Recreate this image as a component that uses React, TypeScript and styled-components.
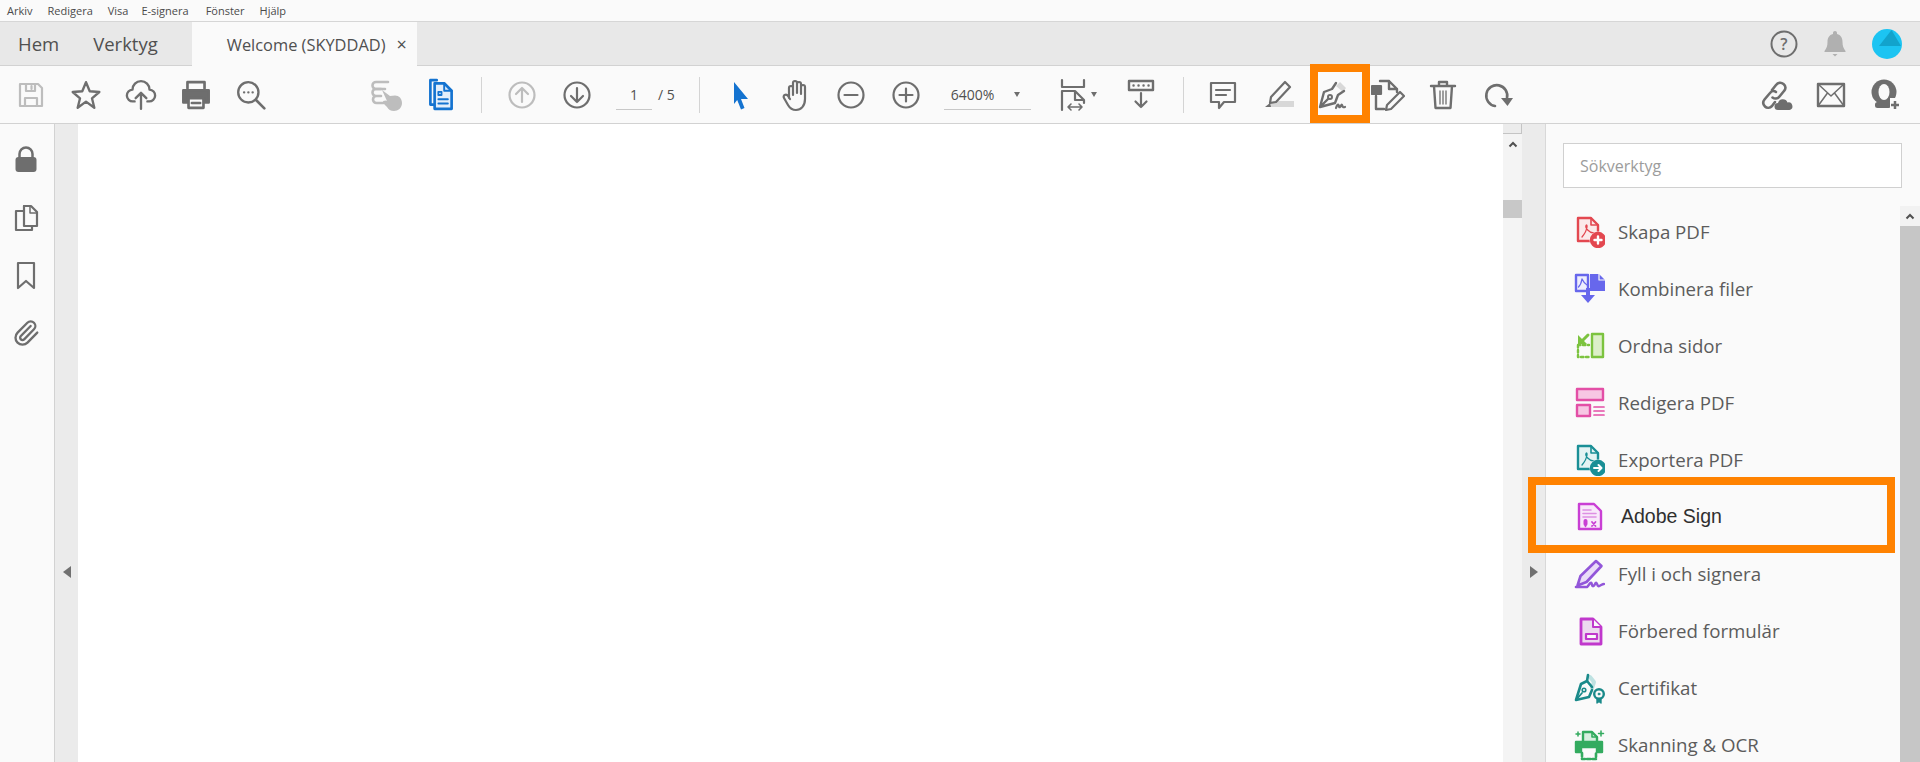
import React from "react";
import styled, { createGlobalStyle } from "styled-components";
import { Paperclip } from "lucide-react";

const GlobalStyle = createGlobalStyle`
  html, body {
    margin: 0;
    height: 100%;
    overflow: hidden;
    background: #fafafa;
    font-family: "Open Sans", "Noto Sans", sans-serif;
  }
  #root {
    height: 100%;
  }
`;

const ORANGE = "#ff8200";
const GREY = "#6e6e6e";

const Page = styled.div`
  height: 762px;
  width: 1920px;
  display: flex;
  flex-direction: column;
  overflow: hidden;
`;

const MenuBar = styled.div`
  height: 21px;
  flex: none;
  display: flex;
  align-items: center;
  background: #fafafa;
  border-bottom: 1px solid #d6d6d6;
`;

const MenuItem = styled.span<{ $left: number }>`
  margin-left: ${(p) => p.$left}px;
  font-size: 11px;
  color: #4b4b4b;
`;

const TabBar = styled.div`
  height: 43px;
  flex: none;
  display: flex;
  align-items: stretch;
  background: #e8e8e8;
  border-bottom: 1px solid #d2d2d2;
`;

const NavTab = styled.div<{ $left: number }>`
  margin-left: ${(p) => p.$left}px;
  display: flex;
  align-items: center;
  font-size: 18.5px;
  color: #505050;
`;

const ActiveTab = styled.div`
  margin-left: 34px;
  margin-bottom: -1px;
  width: 225px;
  display: flex;
  align-items: center;
  padding-left: 35px;
  box-sizing: border-box;
  background: #fafafa;
  font-size: 16.4px;
  color: #505050;
`;

const TabClose = styled.span`
  margin-left: 11px;
  font-size: 18px;
  line-height: 18px;
  color: #505050;
`;

const TabActions = styled.div`
  margin-left: auto;
  display: flex;
  align-items: center;
  gap: 25px;
  padding-right: 18px;
`;

const Toolbar = styled.div`
  height: 57px;
  flex: none;
  display: flex;
  align-items: center;
  background: #fafafa;
  border-bottom: 1px solid #d2d2d2;
`;

const ToolGroup = styled.div<{ $left?: number }>`
  display: flex;
  align-items: center;
  margin-left: ${(p) => p.$left ?? 0}px;
`;

const Tool = styled.div<{ $width?: number }>`
  position: relative;
  width: ${(p) => p.$width ?? 55}px;
  height: 40px;
  display: flex;
  align-items: center;
  justify-content: center;
`;

const ToolHighlight = styled.div`
  position: absolute;
  left: 4px;
  right: -9px;
  top: -11px;
  bottom: -8px;
  border: 8px solid ${ORANGE};
`;

const Separator = styled.div<{ $left: number }>`
  width: 1px;
  height: 36px;
  margin-left: ${(p) => p.$left}px;
  background: #d4d4d4;
`;

const PageBox = styled.div`
  margin-left: 12px;
  display: flex;
  align-items: center;
  font-size: 14px;
  color: #505050;
`;

const PageInput = styled.div`
  width: 36px;
  height: 30px;
  line-height: 29px;
  box-sizing: border-box;
  text-align: center;
  border-bottom: 1px solid #c8c8c8;
`;

const PageTotal = styled.span`
  margin-left: 6px;
`;

const ZoomBox = styled.div`
  margin-left: 10px;
  width: 87px;
  height: 30px;
  box-sizing: border-box;
  padding-left: 7px;
  display: flex;
  align-items: center;
  justify-content: space-between;
  padding-right: 11px;
  border-bottom: 1px solid #c8c8c8;
  font-size: 14px;
  color: #505050;
`;

const Caret = styled.span`
  display: inline-block;
  width: 0;
  height: 0;
  border-left: 3.5px solid transparent;
  border-right: 3.5px solid transparent;
  border-top: 5px solid ${GREY};
`;

const Workspace = styled.div`
  flex: 1;
  min-height: 0;
  display: flex;
`;

const LeftRail = styled.div`
  width: 55px;
  flex: none;
  display: flex;
  flex-direction: column;
  align-items: center;
  gap: 28px;
  padding: 21px 2px 0 0;
  box-sizing: border-box;
  background: #fafafa;
  border-right: 1px solid #d2d2d2;
  color: ${GREY};
`;

const Gutter = styled.div`
  width: 23px;
  flex: none;
  display: flex;
  align-items: center;
  justify-content: center;
  padding-top: 258px;
  box-sizing: border-box;
  background: #ebebeb;
`;

const GutterArrow = styled.span<{ $dir: "left" | "right" }>`
  width: 0;
  height: 0;
  border-top: 6px solid transparent;
  border-bottom: 6px solid transparent;
  border-${(p) => (p.$dir === "left" ? "right" : "left")}: 8px solid #707070;
`;

const Document = styled.div`
  flex: 1;
  background: #ffffff;
`;

const DocScroll = styled.div`
  width: 19px;
  flex: none;
  display: flex;
  flex-direction: column;
  background: #f4f4f4;
`;

const ScrollCap = styled.div`
  height: 9px;
  background: #ececec;
  border-bottom: 1px solid #c4c4c4;
  border-right: 1px solid #c4c4c4;
`;

const ScrollUp = styled.div`
  height: 20px;
  display: flex;
  align-items: center;
  justify-content: center;
`;

const DocThumb = styled.div`
  margin-top: 46px;
  height: 18px;
  background: #c8c8c8;
`;

const ToolsPanel = styled.div`
  width: 375px;
  flex: none;
  display: flex;
  flex-direction: column;
  background: #fafafa;
  border-left: 1px solid #d8d8d8;
  box-sizing: border-box;
`;

const SearchBox = styled.div`
  flex: none;
  margin: 19px 0 0 17px;
  width: 339px;
  height: 45px;
  box-sizing: border-box;
  display: flex;
  align-items: center;
  padding-left: 16px;
  background: #fff;
  border: 1px solid #d0d0d0;
  font-size: 16px;
  color: #9c9c9c;
`;

const ListArea = styled.div`
  flex: 1;
  min-height: 0;
  margin-top: 15px;
  display: flex;
`;

const ToolList = styled.div`
  flex: 1;
  display: flex;
  flex-direction: column;
`;

const ToolRow = styled.div`
  position: relative;
  flex: none;
  height: 57px;
  display: flex;
  align-items: center;
  padding-left: 27px;
`;

const RowIcon = styled.div`
  width: 32px;
  height: 32px;
  flex: none;
`;

const RowLabel = styled.span<{ $strong?: boolean }>`
  margin-left: ${(p) => (p.$strong ? 16 : 13)}px;
  font-family: ${(p) => (p.$strong ? '"Liberation Sans", Arial, sans-serif' : '"Open Sans", "Noto Sans", sans-serif')};
  font-size: ${(p) => (p.$strong ? 19.5 : 18.7)}px;
  color: ${(p) => (p.$strong ? "#2f2f2f" : "#5c5c5c")};
`;

const RowHighlight = styled.div`
  position: absolute;
  left: -18px;
  right: 5px;
  top: -11px;
  bottom: -8px;
  border: 8px solid ${ORANGE};
`;

const ListScroll = styled.div`
  width: 20px;
  flex: none;
  margin-top: 3px;
  display: flex;
  flex-direction: column;
  background: #f2f2f2;
`;

const ListThumb = styled.div`
  flex: 1;
  background: #c6c6c6;
`;

const Svg = styled.svg<{ $size?: number; $tone?: string }>`
  width: ${(p) => p.$size ?? 30}px;
  height: ${(p) => p.$size ?? 30}px;
  display: block;
  fill: none;
  stroke: ${(p) => p.$tone ?? GREY};
  stroke-width: 2.2;
  stroke-linecap: round;
  stroke-linejoin: round;
`;

const ColorSvg = styled.svg<{ $color: string }>`
  width: 32px;
  height: 32px;
  display: block;
  fill: none;
  stroke: ${(p) => p.$color};
  stroke-width: 2.4;
  stroke-linejoin: round;
  stroke-linecap: round;
`;

const UpChevron = () => (
  <svg width="10" height="7" viewBox="0 0 10 7" fill="none" stroke="#505050" strokeWidth="2">
    <path d="M1.5 5.5 5 2l3.5 3.5" />
  </svg>
);

// ---- toolbar drawings ----

const SaveIcon = () => (
  <Svg viewBox="0 0 30 30" $tone="#bdbdbd">
    <path d="M4 4h18l4 4v18H4z" />
    <path d="M10 4v7h9V4M15.5 6v3M9 26v-8h12v8" />
  </Svg>
);
const StarIcon = () => (
  <Svg viewBox="0 0 30 30" $size={32}>
    <path d="M15 3l3.5 8.5 9 .7-6.9 5.900 2.2 8.900L15 21.200 7.200 27l2.200-8.900L2.500 12.200l9-.7z" />
  </Svg>
);
const UploadIcon = () => (
  <Svg viewBox="0 0 30 30" $size={32}>
    <path d="M9 21H7.5a5.5 5.5 0 0 1-.5-11 8 8 0 0 1 16 0 5.5 5.5 0 0 1-.5 11H21" />
    <path d="M15 28V13M10 18l5-5 5 5" />
  </Svg>
);
const PrintIcon = () => (
  <Svg viewBox="0 0 30 30" $size={32}>
    <path d="M7 9V3h16v6" strokeWidth="2.5" />
    <path d="M3 10.5h24V22h-4v-5H7v5H3z" fill={GREY} />
    <path d="M8 18h14v9H8z" strokeWidth="2.5" />
    <path d="M11 22.5h8" />
  </Svg>
);
const SearchMoreIcon = () => (
  <Svg viewBox="0 0 30 30" $size={32}>
    <circle cx="12.5" cy="12.5" r="9.5" />
    <path d="M19.5 19.5 27.5 27.5" strokeWidth="2.5" />
    <path d="M8.5 12.5h.1M12.5 12.5h.1M16.5 12.5h.1" />
  </Svg>
);
const TouchIcon = () => (
  <Svg viewBox="0 0 34 34" $size={34} $tone="#bdbdbd">
    <path d="M19 4H7a3.5 3.5 0 0 0 0 7h9" strokeWidth="2.6" />
    <path d="M12 11H7a3.5 3.5 0 0 0 0 7h5M12 18H7.5a3.5 3.5 0 0 0 0 7h7" strokeWidth="2.6" />
    <path d="M13 12l8 6 5-.5c4 0 7 3 7 7.5 0 5-4 8-8 8-3.5 0-5.5-1.500-7-4l-3-3-1-3 3-.5 1 .5z" fill="#bdbdbd" stroke="none" />
  </Svg>
);
const DocBlueIcon = () => (
  <Svg viewBox="0 0 30 32" $size={34} $tone="#1473d0">
    <path d="M11 2H5v23h3" strokeWidth="2.5" />
    <path d="M9 5h9l7 7v17H9z" fill="#e3eefa" strokeWidth="2.5" />
    <path d="M18 5v7h7" strokeWidth="1.8" />
    <path d="M12.5 13h3v3h-3zM12.5 20h9M12.5 24h9" strokeWidth="1.7" />
  </Svg>
);
const CircleArrow = ({ up, dim }: { up?: boolean; dim?: boolean }) => (
  <Svg viewBox="0 0 30 30" $tone={dim ? "#bdbdbd" : GREY}>
    <circle cx="15" cy="15" r="12.5" />
    <path d={up ? "M15 22V8M9 14l6-6 6 6" : "M15 8v14M9 16l6 6 6-6"} />
  </Svg>
);
const PointerIcon = () => (
  <svg width="30" height="32" viewBox="0 0 30 32">
    <path d="M8 3l14 17h-7l3.5 9-3.5 1.5-3.8-9.5L8 25z" fill="#1473d0" />
  </svg>
);
const HandIcon = () => (
  <Svg viewBox="0 0 32 34" $size={34}>
    <path d="M9 20V10a2 2 0 0 1 4 0v7M13 15V5a2 2 0 0 1 4 0v10M17 15V6a2 2 0 0 1 4 0v9M21 16V9a2 2 0 0 1 4 0v12c0 7-4 11-9 11-4 0-6-1.500-8-5l-4-7c-1.500-2.500 2-5 4-2l2 3" />
  </Svg>
);
const CircleSign = ({ plus }: { plus?: boolean }) => (
  <Svg viewBox="0 0 30 30">
    <circle cx="15" cy="15" r="12.5" />
    <path d={plus ? "M8.5 15h13M15 8.5v13" : "M8.5 15h13"} />
  </Svg>
);
const FitSvg = styled(Svg)`
  width: 26px;
  height: 34px;
`;
const FitIcon = () => (
  <FitSvg viewBox="0 0 26 34">
    <path d="M2 2v7h22V2" />
    <path d="M2 32V13h13l9 9v3M15 13v9h9" />
    <path d="M8 29h14M11 26l-3 3 3 3M19 26l3 3-3 3" strokeWidth="1.6" />
  </FitSvg>
);
const ScrollModeSvg = styled(Svg)`
  width: 30px;
  height: 34px;
`;
const ScrollModeIcon = () => (
  <ScrollModeSvg viewBox="0 0 30 34">
    <path d="M3 3h24v9H3z" strokeWidth="2.4" />
    <path d="M7.5 7.5h.1M12.5 7.5h.1M17.500 7.5h.1M22.5 7.5h.1" strokeWidth="2.4" />
    <path d="M15 15v14M9.500 23.500 15 29l5.500-5.500" />
  </ScrollModeSvg>
);
const CommentIcon = () => (
  <Svg viewBox="0 0 30 30">
    <path d="M3 3h24v19H16l-5 6v-6H3z" />
    <path d="M8 10h14M8 15h10" />
  </Svg>
);
const HighlightIcon = () => (
  <svg width="34" height="32" viewBox="0 0 34 32" fill="none">
    <path d="M6 28h27v-6H12z" fill="#d8d8d8" />
    <path d="M24 3l5 5-14 15-6 1 1-6z" stroke={GREY} strokeWidth="2.2" strokeLinejoin="round" />
    <path d="M9 24l-5 4h6z" fill={GREY} />
  </svg>
);
const PenSignIcon = () => (
  <svg width="34" height="34" viewBox="0 0 34 34" fill="none" stroke={GREY} strokeWidth="2.4" strokeLinecap="round" strokeLinejoin="round">
    <path d="M24 4l6 6-3 4-7-6z" fill="#d8d8d8" stroke="none" />
    <path d="M20 5l-4 6-8 3-4 15 15-4 3-8 6-4M4 29l8-8" />
    <circle cx="14" cy="19" r="2" strokeWidth="2" />
    <path d="M20 30c1-3 2-4 2.5-3s.5 3 1.500 2 1.500-3 2-2 .5 3 3 2" strokeWidth="2.2" />
  </svg>
);
const DocEditIcon = () => (
  <Svg viewBox="0 0 34 34" $size={34}>
    <path d="M9 3h9l8 8v3M18 3v8h8M5 18v13h8" strokeWidth="2.4" />
    <path d="M1 8h9v8H1z" fill={GREY} />
    <path d="M29 14l4 4-13 13-5 1 1-5z" />
  </Svg>
);
const TrashIcon = () => (
  <Svg viewBox="0 0 30 32" $size={32}>
    <path d="M3 7h24M11 7V3h8v4M6 7l1.500 22h15L24 7" strokeWidth="2.4" />
    <path d="M12 12v13M15 12v13M18 12v13" strokeWidth="1.3" />
  </Svg>
);
const RotateIcon = () => (
  <svg width="30" height="30" viewBox="0 0 30 30" fill="none">
    <path d="M12 26A10.5 10.5 0 1 1 24 18" stroke={GREY} strokeWidth="2.6" strokeLinecap="round" />
    <path d="M18 18h12l-5.5 8z" fill={GREY} />
  </svg>
);
const LinkCloudIcon = () => (
  <Svg viewBox="0 0 34 34" $size={34}>
    <path d="M13 12l4-5c2-2.5 5-3 7.500-1s2.500 5 .5 7l-4.500 5.500c-2 2.500-5 2.500-7 1" strokeWidth="2.6" />
    <path d="M17 14c-2-1.500-4.500-1-6 1l-5.500 6.500c-2 2.500-1.500 5 .5 7s5 1.500 7-.5l3-4" strokeWidth="2.6" />
    <path d="M19 32a3.5 3.5 0 0 1 0-7 5 5 0 0 1 9.5-.5 3.8 3.8 0 0 1 2 7.500z" fill={GREY} stroke="none" />
  </Svg>
);
const MailIcon = () => (
  <Svg viewBox="0 0 30 30">
    <path d="M2 4h26v22H2z" strokeWidth="2.4" />
    <path d="M2 4l13 12L28 4M2 26l9.5-13M28 26l-9.5-13" strokeWidth="1.5" />
  </Svg>
);
const UserPlusIcon = () => (
  <svg width="32" height="34" viewBox="0 0 32 34">
    <circle cx="14" cy="14" r="12.5" fill={GREY} />
    <ellipse cx="14" cy="14" rx="5.5" ry="8" fill="#fafafa" />
    <rect x="5" y="24" width="16" height="6" rx="2.5" fill={GREY} />
    <rect x="20" y="20" width="12" height="14" fill="#fafafa" />
    <path d="M25 23v8M21 27h8" stroke={GREY} strokeWidth="2.5" />
  </svg>
);
const HelpIcon = () => (
  <svg width="28" height="28" viewBox="0 0 28 28" fill="none">
    <circle cx="14" cy="14" r="12.5" stroke={GREY} strokeWidth="2" />
    <text x="14" y="19.5" textAnchor="middle" fontFamily="Open Sans, sans-serif" fontSize="16" fontWeight="600" fill={GREY}>?</text>
  </svg>
);
const BellIcon = () => (
  <svg width="24" height="30" viewBox="0 0 24 30">
    <path d="M12 2c1.200 0 2 .8 2 2v1c4 1 5.500 4 5.500 8 0 4 1 6 3 9v1H1.500v-1c2-3 3-5 3-9 0-4 1.500-7 5.500-8V4c0-1.200.8-2 2-2z" fill="#b0b0b0" />
    <path d="M9.5 25h5l-2.5 2.5z" fill="#b0b0b0" />
  </svg>
);
const AvatarIcon = () => (
  <svg width="30" height="30" viewBox="0 0 30 30">
    <circle cx="15" cy="15" r="15" fill="#1cc4f2" />
    <path d="M19.5 1 29 17H7z" fill="#12a3cc" />
  </svg>
);
const LockIcon = () => (
  <svg width="24" height="30" viewBox="0 0 24 30">
    <path d="M5.5 13V9a6.5 6.5 0 0 1 13 0v4" fill="none" stroke={GREY} strokeWidth="2.5" />
    <rect x="1.5" y="12" width="21" height="15" rx="3" fill={GREY} />
  </svg>
);
const RailSvg = styled(Svg)<{ $w: number }>`
  width: ${(p) => p.$w}px;
  height: 30px;
`;
const PagesIcon = () => (
  <RailSvg $w={26} viewBox="0 0 26 30">
    <path d="M11 3h7l6 6v14h-5" />
    <path d="M17 3v7h7" strokeWidth="1.5" />
    <path d="M11 3v5H3v19h16v-4" />
    <path d="M11 8v15h8" />
  </RailSvg>
);
const BookmarkIcon = () => (
  <RailSvg $w={24} viewBox="0 0 24 30">
    <path d="M4 2h16v25l-8-7-8 7z" />
  </RailSvg>
);

// ---- tool list drawings ----

const pdfMark = "M9 21c2.5-3 4.5-6 5-10 .3-2-.5-2.5-1-1.500-1 2.500 3 7 7.500 7.500";

const toolIcons: Record<string, React.ReactNode> = {
  create: (
    <ColorSvg $color="#e34850" viewBox="0 0 32 32">
      <path d="M5 2h13l7 7v16H5z" fill="#fbe9e9" />
      <path d="M18 2v7h7" strokeWidth="1.6" />
      <path d={pdfMark} strokeWidth="1.3" />
      <circle cx="25" cy="24" r="8.5" fill="#fafafa" stroke="none" />
      <circle cx="25" cy="24" r="7" fill="#e34850" />
      <path d="M25 20.5v7M21.5 24h7" stroke="#fff" strokeWidth="2.4" />
    </ColorSvg>
  ),
  combine: (
    <ColorSvg $color="#6767ec" viewBox="0 0 32 32">
      <path d="M3 2h12v16H3z" fill="#eeeefd" />
      <path d="M5.5 14c2-2 3-5 3.5-8 1.5 3 3 5 5 6" strokeWidth="1.3" />
      <path d="M17 1h9l6 6v11H17z" fill="#6767ec" stroke="none" />
      <path d="M26 1v6h6" stroke="#fafafa" strokeWidth="1.2" />
      <path d="M15 15v8" strokeWidth="4" strokeLinecap="butt" stroke="#6767ec" />
      <path d="M8 22h14l-7 8z" fill="#6767ec" stroke="none" />
    </ColorSvg>
  ),
  organize: (
    <ColorSvg $color="#7cc33f" viewBox="0 0 32 32">
      <path d="M19 4h11v23H19z" fill="#dcefc8" />
      <path d="M5 15h11M5 15v12h11" strokeDasharray="2.5 2.5" />
      <path d="M15 5 9 11" strokeWidth="3" />
      <path d="M5 5v9h9z" fill="#7cc33f" stroke="none" />
    </ColorSvg>
  ),
  edit: (
    <ColorSvg $color="#e34fa6" viewBox="0 0 32 32">
      <path d="M4 2h26v11H4z" fill="#f7c6e3" />
      <path d="M4 18h13v11H4z" fill="#f7c6e3" />
      <path d="M21 20h10M21 24h10M21 28h10" strokeWidth="1.7" />
    </ColorSvg>
  ),
  exportPdf: (
    <ColorSvg $color="#1a8f96" viewBox="0 0 32 32">
      <path d="M5 2h13l7 7v16H5z" fill="#e4f3f3" />
      <path d="M18 2v7h7" strokeWidth="1.6" />
      <path d={pdfMark} strokeWidth="1.3" />
      <circle cx="25" cy="24" r="8.5" fill="#fafafa" stroke="none" />
      <circle cx="25" cy="24" r="7" fill="#1a8f96" />
      <path d="M21 24h7M25.5 21l3 3-3 3" stroke="#fff" strokeWidth="2" />
    </ColorSvg>
  ),
  sign: (
    <ColorSvg $color="#c93fd4" viewBox="0 0 32 32">
      <path d="M6 3h15l7 7v18H6z" fill="#f8e8fa" />
      <path d="M10 9h8M10 12.5h13M10 16h13" stroke="#dd8fe3" strokeWidth="1.6" />
      <path d="M12.5 20v3" strokeWidth="4" strokeLinecap="round" />
      <path d="M12.5 24v1.5" strokeWidth="1.6" />
      <path d="M19 21l3.5 4M22.5 21l-3.5 4" strokeWidth="1.8" />
    </ColorSvg>
  ),
  fill: (
    <ColorSvg $color="#9256d9" viewBox="0 0 32 32">
      <path d="M23 3l5.5 5-15 16-9 3.5 3-9.5z" fill="#eadcf8" strokeWidth="2.6" />
      <path d="M3 29h11" strokeWidth="2.6" />
      <path d="M15 28c2-3 3-4 3.5-3s.5 4 2 3 2-4 3-3 1 4 3 3 3-2 4.500-2" strokeWidth="2.4" />
    </ColorSvg>
  ),
  forms: (
    <ColorSvg $color="#c038cc" viewBox="0 0 32 32">
      <path d="M8 4h12l8 8v17H8z" fill="#ecd9ef" strokeWidth="2.8" />
      <path d="M20 4v8h8" strokeWidth="2" fill="#fafafa" />
      <path d="M13 19h11v5H13z" fill="#fafafa" strokeWidth="2.2" />
    </ColorSvg>
  ),
  cert: (
    <ColorSvg $color="#1a8a8a" viewBox="0 0 32 32">
      <path d="M17 5 21 10l-2 6" stroke="#bfe2e2" strokeWidth="4" />
      <path d="M15 3l-1 6-6 3L3 28l13-3 3-7" strokeWidth="2.6" />
      <path d="M14 9l5 6" strokeWidth="2.6" />
      <path d="M3 28l6-7" strokeWidth="1.8" />
      <circle cx="11" cy="18" r="1.8" strokeWidth="1.6" />
      <circle cx="26" cy="22" r="4.8" />
      <circle cx="26" cy="22" r="1" fill="#1a8a8a" strokeWidth="0.8" />
      <path d="M24 27v4l2-1.5 2 1.500v-4" strokeWidth="1.4" fill="#1a8a8a" />
    </ColorSvg>
  ),
  scan: (
    <ColorSvg $color="#33ab5f" viewBox="0 0 32 32">
      <path d="M10 13V3h9l5 5v5" fill="#d6efdf" />
      <path d="M19 3v5h5" strokeWidth="1.6" />
      <path d="M3 13h26v10h-5v-5H8v5H3z" fill="#33ab5f" />
      <path d="M9 24v6h14v-6" strokeDasharray="3.5 2" strokeWidth="2.6" />
      <path d="M5 3v4M3 5h4M28 2v5M25.5 4.5h5" strokeWidth="1.5" />
    </ColorSvg>
  ),
};

const menuItems: [string, number][] = [
  ["Arkiv", 7],
  ["Redigera", 15],
  ["Visa", 15],
  ["E-signera", 13],
  ["Fönster", 17],
  ["Hjälp", 15],
];

const tools = [
  { id: "create", label: "Skapa PDF" },
  { id: "combine", label: "Kombinera filer" },
  { id: "organize", label: "Ordna sidor" },
  { id: "edit", label: "Redigera PDF" },
  { id: "exportPdf", label: "Exportera PDF" },
  { id: "sign", label: "Adobe Sign", highlight: true },
  { id: "fill", label: "Fyll i och signera" },
  { id: "forms", label: "Förbered formulär" },
  { id: "cert", label: "Certifikat" },
  { id: "scan", label: "Skanning & OCR" },
];

const App = () => (
  <Page>
    <GlobalStyle />
    <MenuBar>
      {menuItems.map(([name, left]) => (
        <MenuItem key={name} $left={left}>
          {name}
        </MenuItem>
      ))}
    </MenuBar>

    <TabBar>
      <NavTab $left={18}>Hem</NavTab>
      <NavTab $left={34}>Verktyg</NavTab>
      <ActiveTab>
        Welcome (SKYDDAD)
        <TabClose>×</TabClose>
      </ActiveTab>
      <TabActions>
        <HelpIcon />
        <BellIcon />
        <AvatarIcon />
      </TabActions>
    </TabBar>

    <Toolbar>
      <ToolGroup $left={3}>
        <Tool><SaveIcon /></Tool>
        <Tool><StarIcon /></Tool>
        <Tool><UploadIcon /></Tool>
        <Tool><PrintIcon /></Tool>
        <Tool><SearchMoreIcon /></Tool>
      </ToolGroup>
      <ToolGroup $left={80}>
        <Tool><TouchIcon /></Tool>
        <Tool><DocBlueIcon /></Tool>
      </ToolGroup>
      <Separator $left={13} />
      <ToolGroup $left={12}>
        <Tool><CircleArrow up dim /></Tool>
        <Tool><CircleArrow /></Tool>
      </ToolGroup>
      <PageBox>
        <PageInput>1</PageInput>
        <PageTotal>/ 5</PageTotal>
      </PageBox>
      <Separator $left={24} />
      <ToolGroup $left={14}>
        <Tool><PointerIcon /></Tool>
        <Tool><HandIcon /></Tool>
        <Tool><CircleSign /></Tool>
        <Tool><CircleSign plus /></Tool>
      </ToolGroup>
      <ZoomBox>
        6400%
        <Caret />
      </ZoomBox>
      <ToolGroup $left={29}>
        <Tool $width={26}><FitIcon /></Tool>
        <Tool $width={16}><Caret /></Tool>
      </ToolGroup>
      <ToolGroup $left={12}>
        <Tool><ScrollModeIcon /></Tool>
      </ToolGroup>
      <Separator $left={14} />
      <ToolGroup $left={12}>
        <Tool><CommentIcon /></Tool>
        <Tool><HighlightIcon /></Tool>
        <Tool>
          <PenSignIcon />
          <ToolHighlight />
        </Tool>
        <Tool><DocEditIcon /></Tool>
        <Tool><TrashIcon /></Tool>
        <Tool><RotateIcon /></Tool>
      </ToolGroup>
      <ToolGroup $left={223}>
        <Tool><LinkCloudIcon /></Tool>
        <Tool><MailIcon /></Tool>
        <Tool><UserPlusIcon /></Tool>
      </ToolGroup>
    </Toolbar>

    <Workspace>
      <LeftRail>
        <LockIcon />
        <PagesIcon />
        <BookmarkIcon />
        <Paperclip size={28} strokeWidth={2} />
      </LeftRail>
      <Gutter>
        <GutterArrow $dir="left" />
      </Gutter>
      <Document />
      <DocScroll>
        <ScrollCap />
        <ScrollUp>
          <UpChevron />
        </ScrollUp>
        <DocThumb />
      </DocScroll>
      <Gutter>
        <GutterArrow $dir="right" />
      </Gutter>
      <ToolsPanel>
        <SearchBox>Sökverktyg</SearchBox>
        <ListArea>
          <ToolList>
            {tools.map((tool) => (
              <ToolRow key={tool.id}>
                <RowIcon>{toolIcons[tool.id]}</RowIcon>
                <RowLabel $strong={tool.highlight}>{tool.label}</RowLabel>
                {tool.highlight && <RowHighlight />}
              </ToolRow>
            ))}
          </ToolList>
          <ListScroll>
            <ScrollUp>
              <UpChevron />
            </ScrollUp>
            <ListThumb />
          </ListScroll>
        </ListArea>
      </ToolsPanel>
    </Workspace>
  </Page>
);

export default App;
